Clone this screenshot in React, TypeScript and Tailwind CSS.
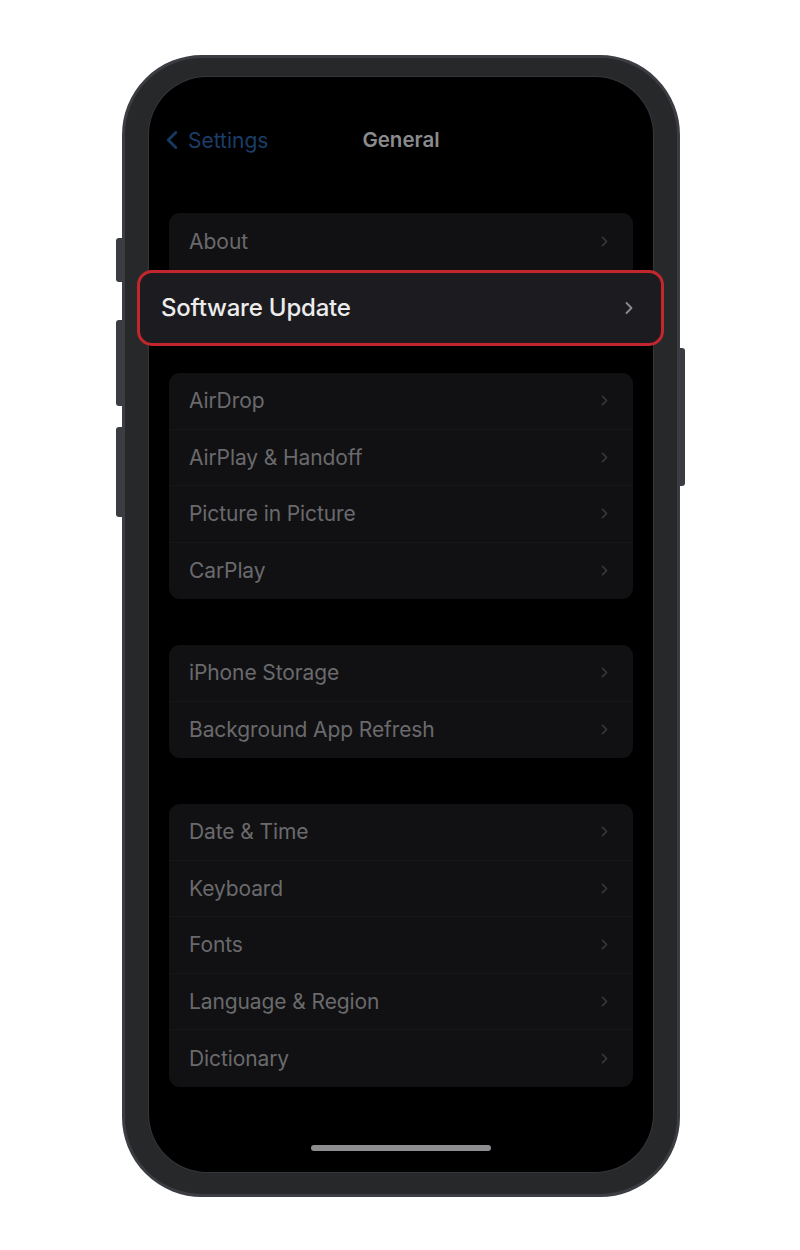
import { ChevronLeft, ChevronRight } from 'lucide-react'

const groups: string[][] = [
  ['AirDrop', 'AirPlay & Handoff', 'Picture in Picture', 'CarPlay'],
  ['iPhone Storage', 'Background App Refresh'],
  ['Date & Time', 'Keyboard', 'Fonts', 'Language & Region', 'Dictionary']
]

const Row = ({ label, divider }: { label: string; divider: boolean }) => (
  <div
    className={
      'flex h-[56.5px] items-center justify-between pl-5 pr-[20px] ' +
      (divider ? 'border-b border-[#17171a]' : '')
    }
  >
    <span className="text-[21px] leading-none tracking-[-0.1px] text-[#6a6a6d]">{label}</span>
    <ChevronRight className="h-[17px] w-[17px] text-[#3a3a3d]" strokeWidth={2.2} />
  </div>
)

const Group = ({ items }: { items: string[] }) => (
  <div className="overflow-hidden rounded-[11px] bg-[#111113]">
    {items.map((item, i) => (
      <Row key={item} label={item} divider={i < items.length - 1} />
    ))}
  </div>
)

export default function App() {
  return (
    <div
      className="min-h-[1250px] w-[800px] bg-white pl-[122px] pt-[55px]"
      style={{ fontFamily: 'Inter, "Noto Sans", sans-serif' }}
    >
      <div className="relative h-[1142px] w-[558px] rounded-[80px] border-[3px] border-[#3b3d42] bg-[#272829] px-[24px] pb-[22px] pt-[19px]">
        {/* side buttons */}
        <div className="absolute -left-[9px] top-[180px] h-[44px] w-[6px] rounded-l-[3px] bg-[#3a3c42]" />
        <div className="absolute -left-[9px] top-[262px] h-[86px] w-[6px] rounded-l-[3px] bg-[#3a3c42]" />
        <div className="absolute -left-[9px] top-[369px] h-[90px] w-[6px] rounded-l-[3px] bg-[#3a3c42]" />
        <div className="absolute -right-[8px] top-[290px] h-[138px] w-[5px] rounded-r-[3px] bg-[#3a3c42]" />

        <div className="relative flex h-full flex-col rounded-[58px] bg-black ring-1 ring-[#34363b]">
          {/* nav */}
          <div className="relative mt-[48px] flex h-[30px] items-center justify-center">
            <div className="absolute left-[8px] flex items-center">
              <ChevronLeft className="h-[30px] w-[30px] text-[#17395f]" strokeWidth={2.4} />
              <span className="ml-[1px] text-[21px] leading-none text-[#1a3e68]">Settings</span>
            </div>
            <span className="text-[20.5px] font-semibold leading-none text-[#8b8b8e]">General</span>
          </div>

          <div className="mt-[58px] flex flex-col gap-[46px] px-5">
            <div className="overflow-hidden rounded-[11px] bg-[#111113]">
              <div className="flex h-[57px] items-center justify-between pl-5 pr-[20px]">
                <span className="text-[21px] leading-none text-[#6a6a6d]">About</span>
                <ChevronRight className="h-[17px] w-[17px] text-[#3a3a3d]" strokeWidth={2.2} />
              </div>
              <div className="h-[57px]" />
            </div>
            {groups.map(g => (
              <Group key={g[0]} items={g} />
            ))}
          </div>

          <div className="mt-auto mb-[21px] flex justify-center">
            <div className="h-[6px] w-[180px] rounded-full bg-[#8e8e90]" />
          </div>

          {/* highlighted row */}
          <div className="absolute -left-[12px] top-[193px] flex h-[76px] w-[527px] items-center justify-between rounded-[15px] border-[3px] border-[#c4262d] bg-[#1c1c20] pl-[21px] pr-[22px]">
            <span className="text-[24px] font-medium leading-none tracking-[-0.2px] text-[#ececec]">
              Software Update
            </span>
            <ChevronRight className="h-[20px] w-[20px] text-[#8d8d90]" strokeWidth={2.2} />
          </div>
        </div>
      </div>
    </div>
  )
}
